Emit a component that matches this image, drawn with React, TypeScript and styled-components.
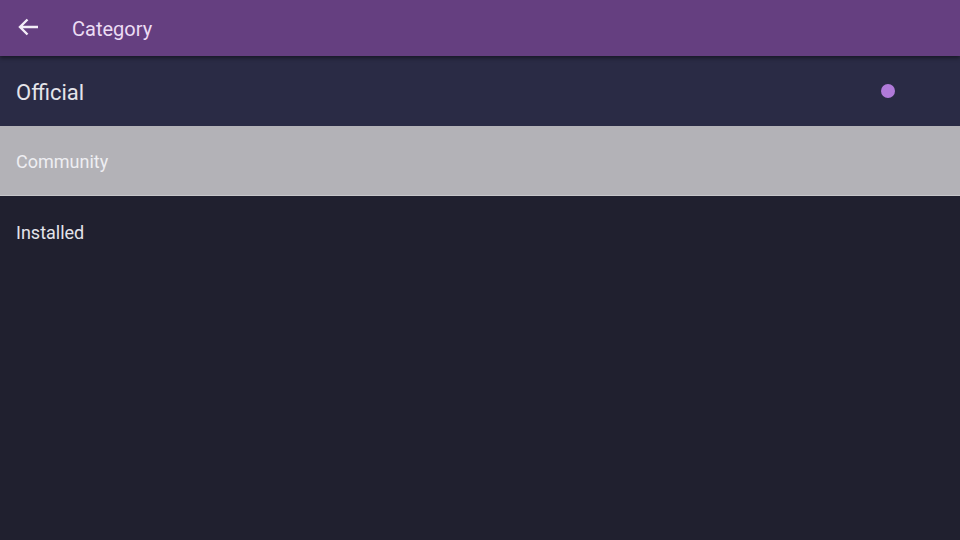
import styled, { createGlobalStyle } from 'styled-components'

const GlobalStyle = createGlobalStyle`
  html, body {
    margin: 0;
    padding: 0;
    height: 100%;
    background: #20202f;
  }
  #root {
    height: 100%;
  }
`

const Screen = styled.div`
  width: 960px;
  height: 540px;
  display: flex;
  flex-direction: column;
  background: #20202f;
  font-family: Roboto, 'Liberation Sans', sans-serif;
  overflow: hidden;
`

const Toolbar = styled.header`
  height: 56px;
  flex: 0 0 56px;
  display: flex;
  align-items: center;
  background: #653f80;
  box-shadow: 0 2px 4px rgba(0, 0, 0, 0.45);
  position: relative;
  z-index: 1;
`

const BackButton = styled.div`
  width: 56px;
  height: 56px;
  display: flex;
  align-items: center;
  justify-content: center;
  margin-right: 16px;
  svg {
    margin-top: -2px;
  }
`

const Title = styled.h1`
  margin: 0;
  font-size: 20px;
  font-weight: 400;
  color: #ecdcf4;
  margin-top: 2px;
`

const List = styled.div`
  display: flex;
  flex-direction: column;
`

type RowProps = { $variant: 'focused' | 'selected' | 'plain' }

const Row = styled.div<RowProps>`
  height: 70px;
  display: flex;
  align-items: center;
  justify-content: space-between;
  padding: 0 65px 0 16px;
  box-sizing: border-box;
  background: ${(p) =>
    p.$variant === 'focused'
      ? '#2a2b45'
      : p.$variant === 'selected'
        ? '#b3b2b7'
        : '#20202f'};
  border-bottom: ${(p) =>
    p.$variant === 'selected' ? '1px solid #c6c6ca' : 'none'};
`

const Label = styled.span<{ $large?: boolean; $light?: boolean }>`
  font-size: ${(p) => (p.$large ? '22px' : '18px')};
  color: ${(p) => (p.$light ? '#eeeef2' : '#e4e4ea')};
  margin-top: 2px;
`

const Dot = styled.span`
  width: 14px;
  height: 14px;
  border-radius: 50%;
  background: #b07ad9;
  margin-top: 0px;
`

const items = [
  { label: 'Official', variant: 'focused' as const, checked: true },
  { label: 'Community', variant: 'selected' as const, checked: false },
  { label: 'Installed', variant: 'plain' as const, checked: false },
]

const App = () => {
  return (
    <>
      <GlobalStyle />
      <Screen>
        <Toolbar>
          <BackButton>
            <svg width='24' height='24' viewBox='0 0 24 24' fill='none'>
              <path
                d='M22 12H4.5M11.5 4.5L4 12L11.5 19.5'
                stroke='#f4eef8'
                strokeWidth='2.4'
                strokeLinecap='butt'
              />
            </svg>
          </BackButton>
          <Title>Category</Title>
        </Toolbar>
        <List>
          {items.map((item) => (
            <Row key={item.label} $variant={item.variant}>
              <Label
                $large={item.variant === 'focused'}
                $light={item.variant === 'selected'}
              >
                {item.label}
              </Label>
              {item.checked && <Dot />}
            </Row>
          ))}
        </List>
      </Screen>
    </>
  )
}

export default App
